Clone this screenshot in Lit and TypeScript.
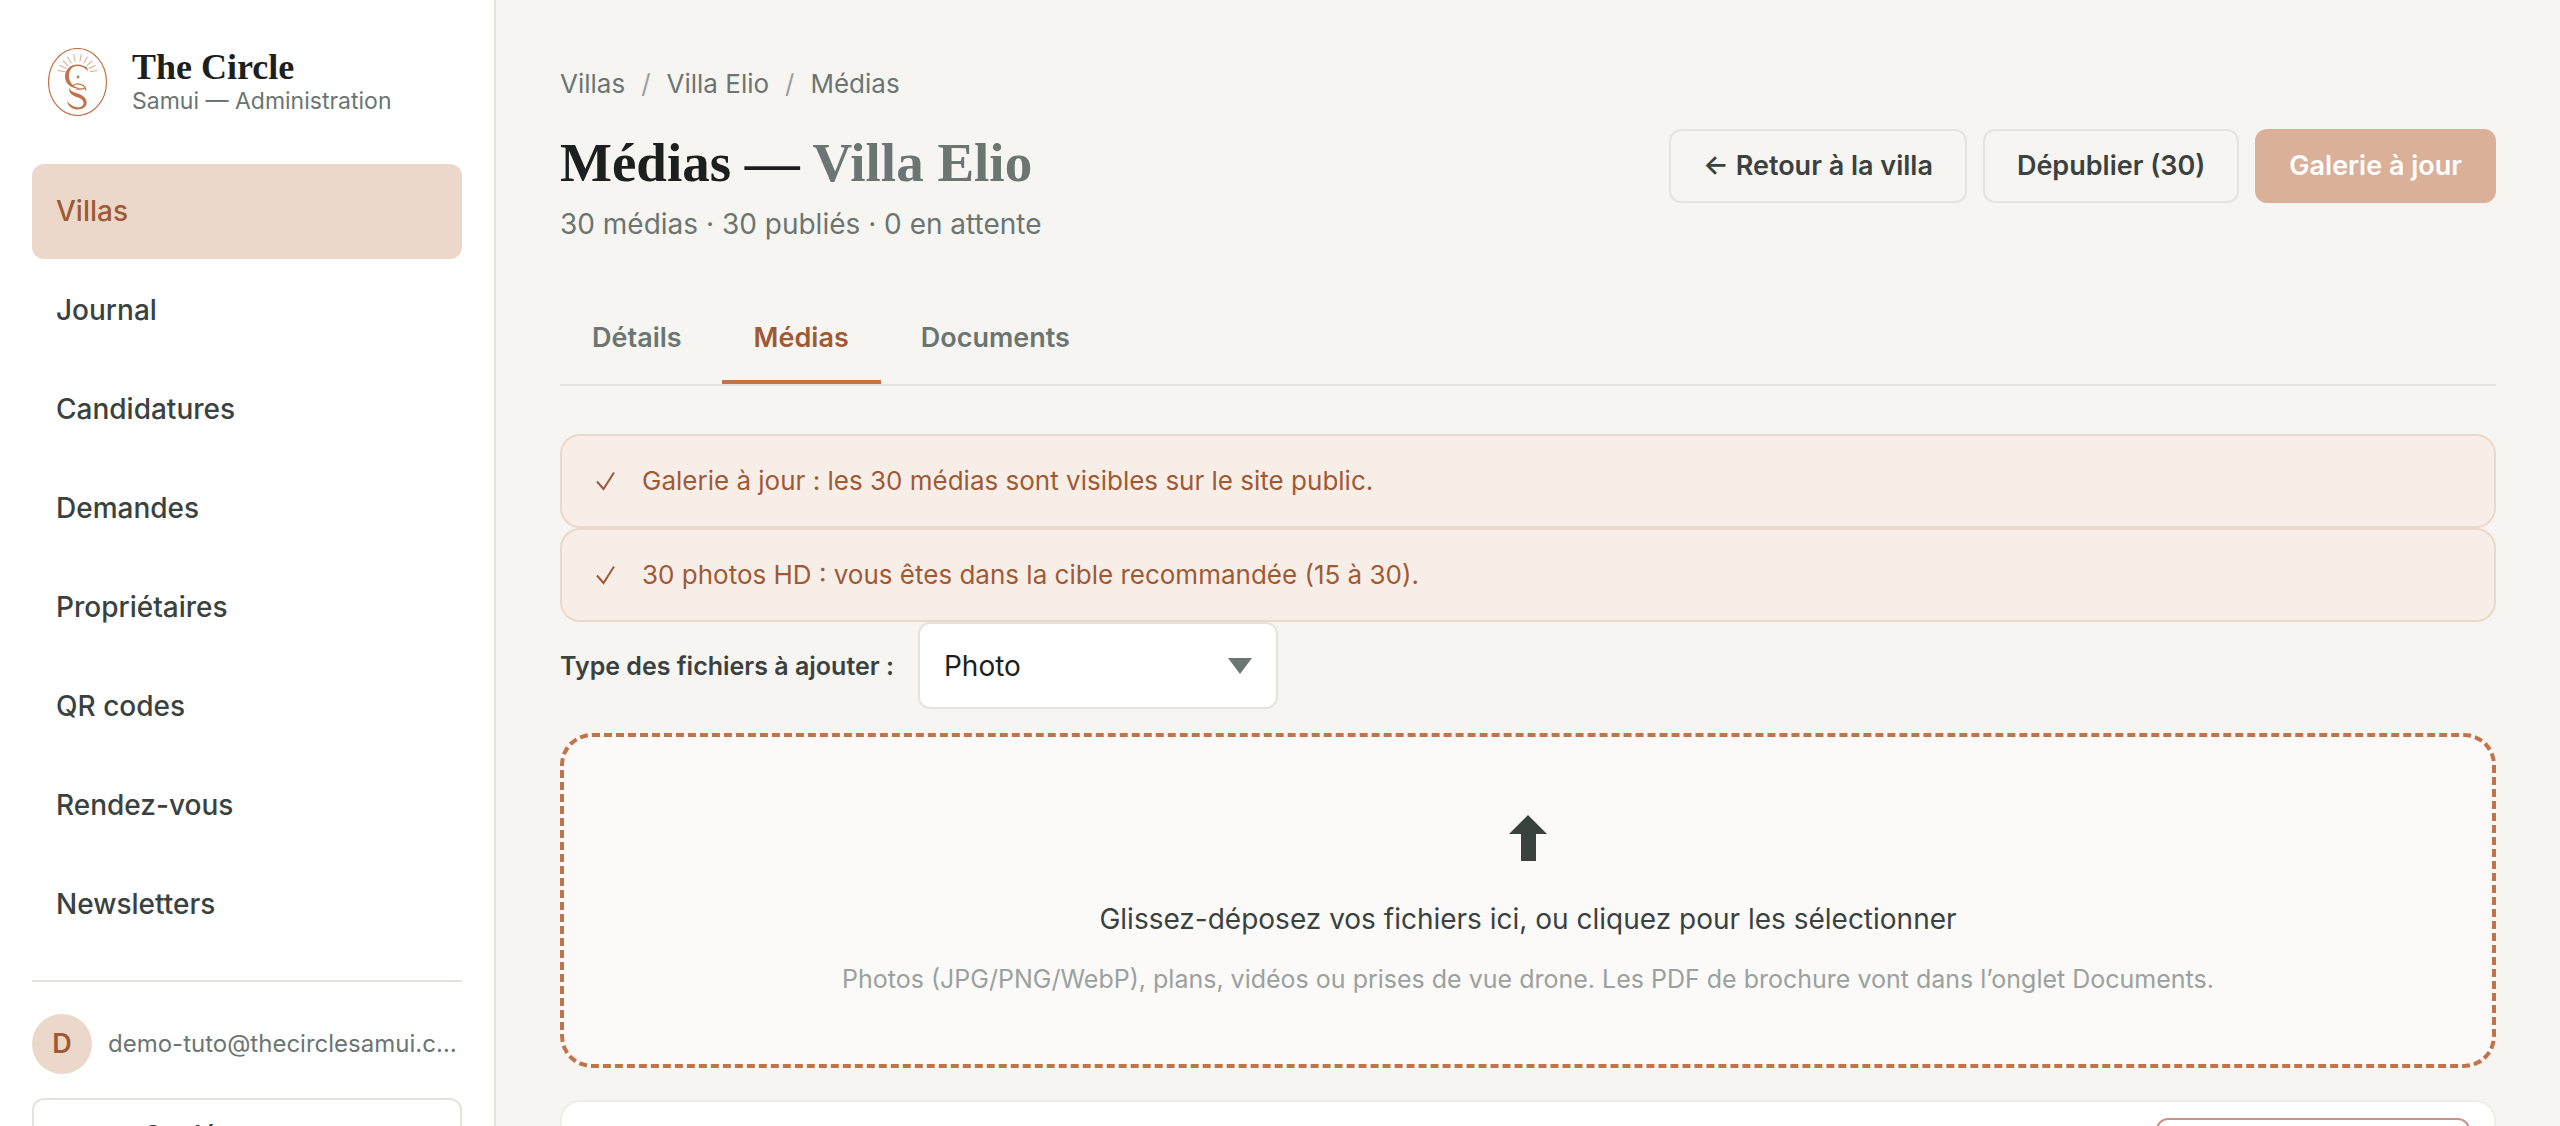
import { LitElement, html, css, svg } from "lit";
import { customElement, state } from "lit/decorators.js";

const NAV = ["Villas", "Journal", "Candidatures", "Demandes", "Propriétaires", "QR codes", "Rendez-vous", "Newsletters"];
const TABS = ["Détails", "Médias", "Documents"];
const NOTICES = [
  "Galerie à jour : les 30 médias sont visibles sur le site public.",
  "30 photos HD : vous êtes dans la cible recommandée (15 à 30).",
];

@customElement("app-root")
export class AppRoot extends LitElement {
  @state() private section = "Villas";
  @state() private tab = "Médias";

  static styles = css`
    :host {
      --ink: #1b1f1d;
      --slate: #3a423f;
      --muted: #6b7571;
      --faint: #9aa19e;
      --line: #e3e4de;
      --copper: #c2734a;
      --rust: #9f5a35;
      --sand: #ebd8ca;
      --serif: "Liberation Serif", serif;
      display: grid;
      grid-template-columns: 496px minmax(0, 1fr);
      height: 100vh;
      overflow: hidden;
      background: #f7f5f1;
      color: var(--slate);
      font-family: Inter, "Liberation Sans", sans-serif;
      font-size: 28px;
      line-height: 44px;
    }
    * { box-sizing: border-box; }
    a { color: inherit; text-decoration: none; }
    button, select { font: inherit; color: inherit; cursor: pointer; }
    h1, p { margin: 0; }
    .sidebar {
      padding: 48px 32px 0;
      background: #fff;
      border-right: 2px solid var(--line);
    }
    .brand { display: flex; align-items: center; gap: 24px; padding-left: 16px; }
    .logo { width: 60px; height: 68px; flex: none; }
    .brand-name { font: 700 36px/38px var(--serif); color: var(--ink); }
    .brand-sub { font-size: 23px; line-height: 30px; color: var(--muted); }
    .nav { display: flex; flex-direction: column; gap: 4px; margin-top: 48px; font-weight: 500; }
    .nav-link { padding: 25px 24px 26px; border-radius: 12px; }
    .nav-link.active { background: var(--sand); color: var(--rust); }
    .account { margin-top: 28px; padding-top: 32px; border-top: 2px solid var(--line); }
    .user { display: flex; align-items: center; gap: 16px; color: var(--muted); font-size: 24px; }
    .avatar {
      display: grid; place-items: center; flex: none;
      width: 60px; height: 60px; border-radius: 50%;
      background: var(--sand); color: var(--rust); font-weight: 600; font-size: 27px;
    }
    .email { overflow: hidden; text-overflow: ellipsis; white-space: nowrap; }
    .btn {
      padding: 12px 32px; white-space: nowrap;
      border: 2px solid var(--line); border-radius: 12px;
      background: transparent; font-weight: 600; font-size: 27px; line-height: 46px;
    }
    .btn.primary { background: #dab098; border-color: #dab098; color: #fff; }
    .btn.logout { width: 100%; margin-top: 24px; padding: 13px 32px; background: #fff; }
    .main { padding: 64px 64px 0; overflow: hidden; }
    .crumbs { display: flex; gap: 16px; font-size: 26px; line-height: 40px; color: var(--muted); }
    .slash { color: var(--faint); }
    .head { display: flex; justify-content: space-between; align-items: flex-start; margin-top: 25px; }
    .title { font: 700 55px/68px var(--serif); color: var(--ink); }
    .title-villa { color: var(--muted); }
    .stats { margin-top: 5px; color: var(--muted); }
    .actions { display: flex; gap: 16px; }
    .tabs { display: flex; gap: 8px; margin-top: 52px; border-bottom: 2px solid var(--line); }
    .tab {
      padding: 20px 32px 22px; border: 0; border-bottom: 4px solid transparent;
      background: none; color: var(--muted); font-weight: 600; font-size: 27px; line-height: 40px;
    }
    .tab.active { color: var(--rust); border-color: var(--copper); }
    .notices { margin-top: 48px; }
    .notice {
      display: flex; align-items: center; gap: 26px; padding: 25px 34px;
      border: 2px solid var(--sand); border-radius: 20px;
      background: #f8eee8; color: var(--rust); font-size: 26px; line-height: 40px;
    }
    .check { width: 20px; height: 20px; flex: none; }
    .kind { display: flex; align-items: center; gap: 24px; }
    .kind-label { font-weight: 600; font-size: 25px; }
    .kind-field { display: grid; align-items: center; }
    .kind-select {
      grid-area: 1 / 1; appearance: none; width: 360px; height: 87px; padding: 0 24px;
      border: 2px solid var(--line); border-radius: 12px; background: #fff; color: var(--ink);
    }
    .caret { grid-area: 1 / 1; justify-self: end; margin-right: 26px; width: 24px; height: 16px; pointer-events: none; }
    .drop {
      display: flex; flex-direction: column; align-items: center; width: 100%;
      margin-top: 24px; padding: 77px 48px 63px;
      border: 4px dashed var(--copper); border-radius: 32px; background: #fbfaf8;
    }
    .arrow { width: 38px; height: 48px; }
    .drop-title { margin-top: 35px; }
    .drop-hint { margin-top: 16px; font-size: 25px; color: var(--faint); }
    .panel {
      display: flex; justify-content: flex-end; margin-top: 32px; padding: 16px 24px; min-height: 120px;
      border: 2px solid #eeeee8; border-radius: 20px; background: #fff;
    }
    .danger { width: 314px; border-color: #cc9088; color: #a5453a; }
  `;

  private logo() {
    const rays = [-80, -64, -48, -30, -11, 11, 30, 48, 64, 80];
    return svg`<svg class="logo" viewBox="0 0 60 68" fill="none" stroke="#c2734a" aria-hidden="true">
      <ellipse cx="29.500" cy="34" rx="29" ry="33.500" stroke-width="1.200"/>
      ${rays.map((a) => svg`<path d="M29.500 13.500V6" stroke-width="1" stroke-opacity=".6" transform="rotate(${a} 29.500 26)"/>`)}
      <path d="M40 23.500C36 18.500 32 18 29.500 18C24 18 21 22 21 28C21 35 26 40 34 40.500C25 42 17 36.500 17 28.500C17 21 23 16.500 29.500 16.500C34 16.500 37 18.500 39 19.500Z" fill="#c2734a" stroke="none"/>
      <path d="M25 37.500C29 34.500 37 36 38 42.500M28 41C32 41.500 36 41 37.500 39.500" stroke-width="1.200"/>
      <circle cx="30" cy="29" r="1.400" fill="#c2734a" stroke="none"/>
      <path d="M21.500 39.500C20 45 24 47.500 30 49.500C35 51.500 36.500 54 35 57C32.500 61 24 60 19 53C20 59 25 61.500 30 61.500C36 61.500 39.500 57.500 38.500 53C37.500 48.500 33 46.500 28 45C24 43.500 22.500 43 21.500 39.500Z" fill="#c2734a" stroke="none"/>
    </svg>`;
  }

  render() {
    return html`
      <aside class="sidebar">
        <a class="brand" href="#">
          ${this.logo()}
          <div><div class="brand-name">The Circle</div><div class="brand-sub">Samui — Administration</div></div>
        </a>
        <nav class="nav">
          ${NAV.map((n) => html`<a class="nav-link ${n === this.section ? "active" : ""}" href="#" @click=${() => (this.section = n)}>${n}</a>`)}
        </nav>
        <div class="account">
          <div class="user"><span class="avatar">D</span><span class="email">demo-tuto@thecirclesamui.com</span></div>
          <button class="btn logout">Se déconnecter</button>
        </div>
      </aside>
      <main class="main">
        <nav class="crumbs">
          <a href="#">Villas</a><span class="slash">/</span><a href="#">Villa Elio</a><span class="slash">/</span><span>Médias</span>
        </nav>
        <header class="head">
          <div>
            <h1 class="title">Médias — <span class="title-villa">Villa Elio</span></h1>
            <p class="stats">30 médias · 30 publiés · 0 en attente</p>
          </div>
          <div class="actions">
            <button class="btn">← Retour à la villa</button>
            <button class="btn">Dépublier (30)</button>
            <button class="btn primary">Galerie à jour</button>
          </div>
        </header>
        <div class="tabs">
          ${TABS.map((t) => html`<button class="tab ${t === this.tab ? "active" : ""}" @click=${() => (this.tab = t)}>${t}</button>`)}
        </div>
        <div class="notices">
          ${NOTICES.map((n) => html`<div class="notice">
            <svg class="check" viewBox="0 0 20 20" fill="none" stroke="currentColor" stroke-width="2" aria-hidden="true"><path d="M1 10.500L7.500 18L18 1.500"/></svg>
            <span>${n}</span>
          </div>`)}
        </div>
        <div class="kind">
          <label class="kind-label" for="kind">Type des fichiers à ajouter :</label>
          <div class="kind-field">
            <select class="kind-select" id="kind"><option>Photo</option><option>Plan</option><option>Vidéo</option><option>Drone</option></select>
            <svg class="caret" viewBox="0 0 24 16" aria-hidden="true"><path d="M0 0H24L12 16Z" fill="#6b7571"/></svg>
          </div>
        </div>
        <button class="drop">
          <svg class="arrow" viewBox="0 0 38 48" aria-hidden="true"><path d="M19 1L38 20H27V47H12V20H0Z" fill="#3a423f"/></svg>
          <span class="drop-title">Glissez-déposez vos fichiers ici, ou cliquez pour les sélectionner</span>
          <span class="drop-hint">Photos (JPG/PNG/WebP), plans, vidéos ou prises de vue drone. Les PDF de brochure vont dans l’onglet Documents.</span>
        </button>
        <section class="panel"><button class="btn danger" aria-label="Supprimer"></button></section>
      </main>
    `;
  }
}
